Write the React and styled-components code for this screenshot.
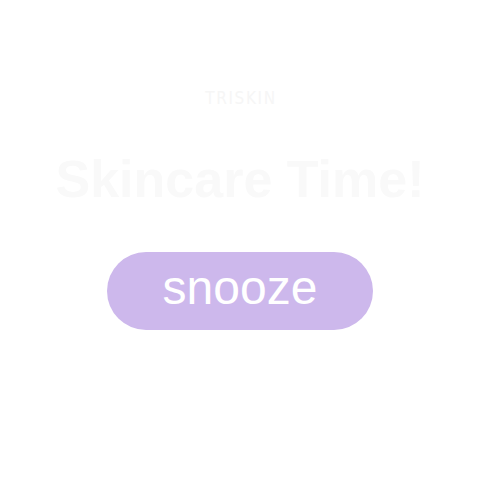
import React from "react";
import styled, { createGlobalStyle } from "styled-components";

const Global = createGlobalStyle`
  html, body { margin: 0; padding: 0; background: #ffffff; }
  body { font-family: "Liberation Sans", Arial, sans-serif; }
`;

const Screen = styled.main`
  width: 480px;
  height: 480px;
  display: flex;
  flex-direction: column;
  align-items: center;
  box-sizing: border-box;
  padding-top: 88px;
  background: #ffffff;
`;

const Brand = styled.div`
  font-family: "DejaVu Sans Condensed", "DejaVu Sans", sans-serif;
  font-stretch: condensed;
  font-weight: 400;
  font-size: 17px;
  line-height: 20px;
  letter-spacing: 1.6px;
  color: #f6f6f6;
  margin-left: 2px;
`;

const Title = styled.h1`
  margin: 41px 0 0;
  font-family: "Liberation Sans", Arial, sans-serif;
  font-weight: 700;
  font-size: 52px;
  line-height: 60px;
  color: #f9f9f9;
`;

const SnoozeButton = styled.button`
  margin-top: 43px;
  width: 266px;
  height: 78px;
  border: none;
  border-radius: 39px;
  background: #cdb8ec;
  color: #ffffff;
  font-family: "Liberation Sans", Arial, sans-serif;
  font-size: 48px;
  line-height: 1;
  padding: 0 0 6px;
  display: flex;
  align-items: center;
  justify-content: center;
  cursor: pointer;
`;

export default function App() {
  return (
    <>
      <Global />
      <Screen>
        <Brand>TRISKIN</Brand>
        <Title>Skincare Time!</Title>
        <SnoozeButton>snooze</SnoozeButton>
      </Screen>
    </>
  );
}
